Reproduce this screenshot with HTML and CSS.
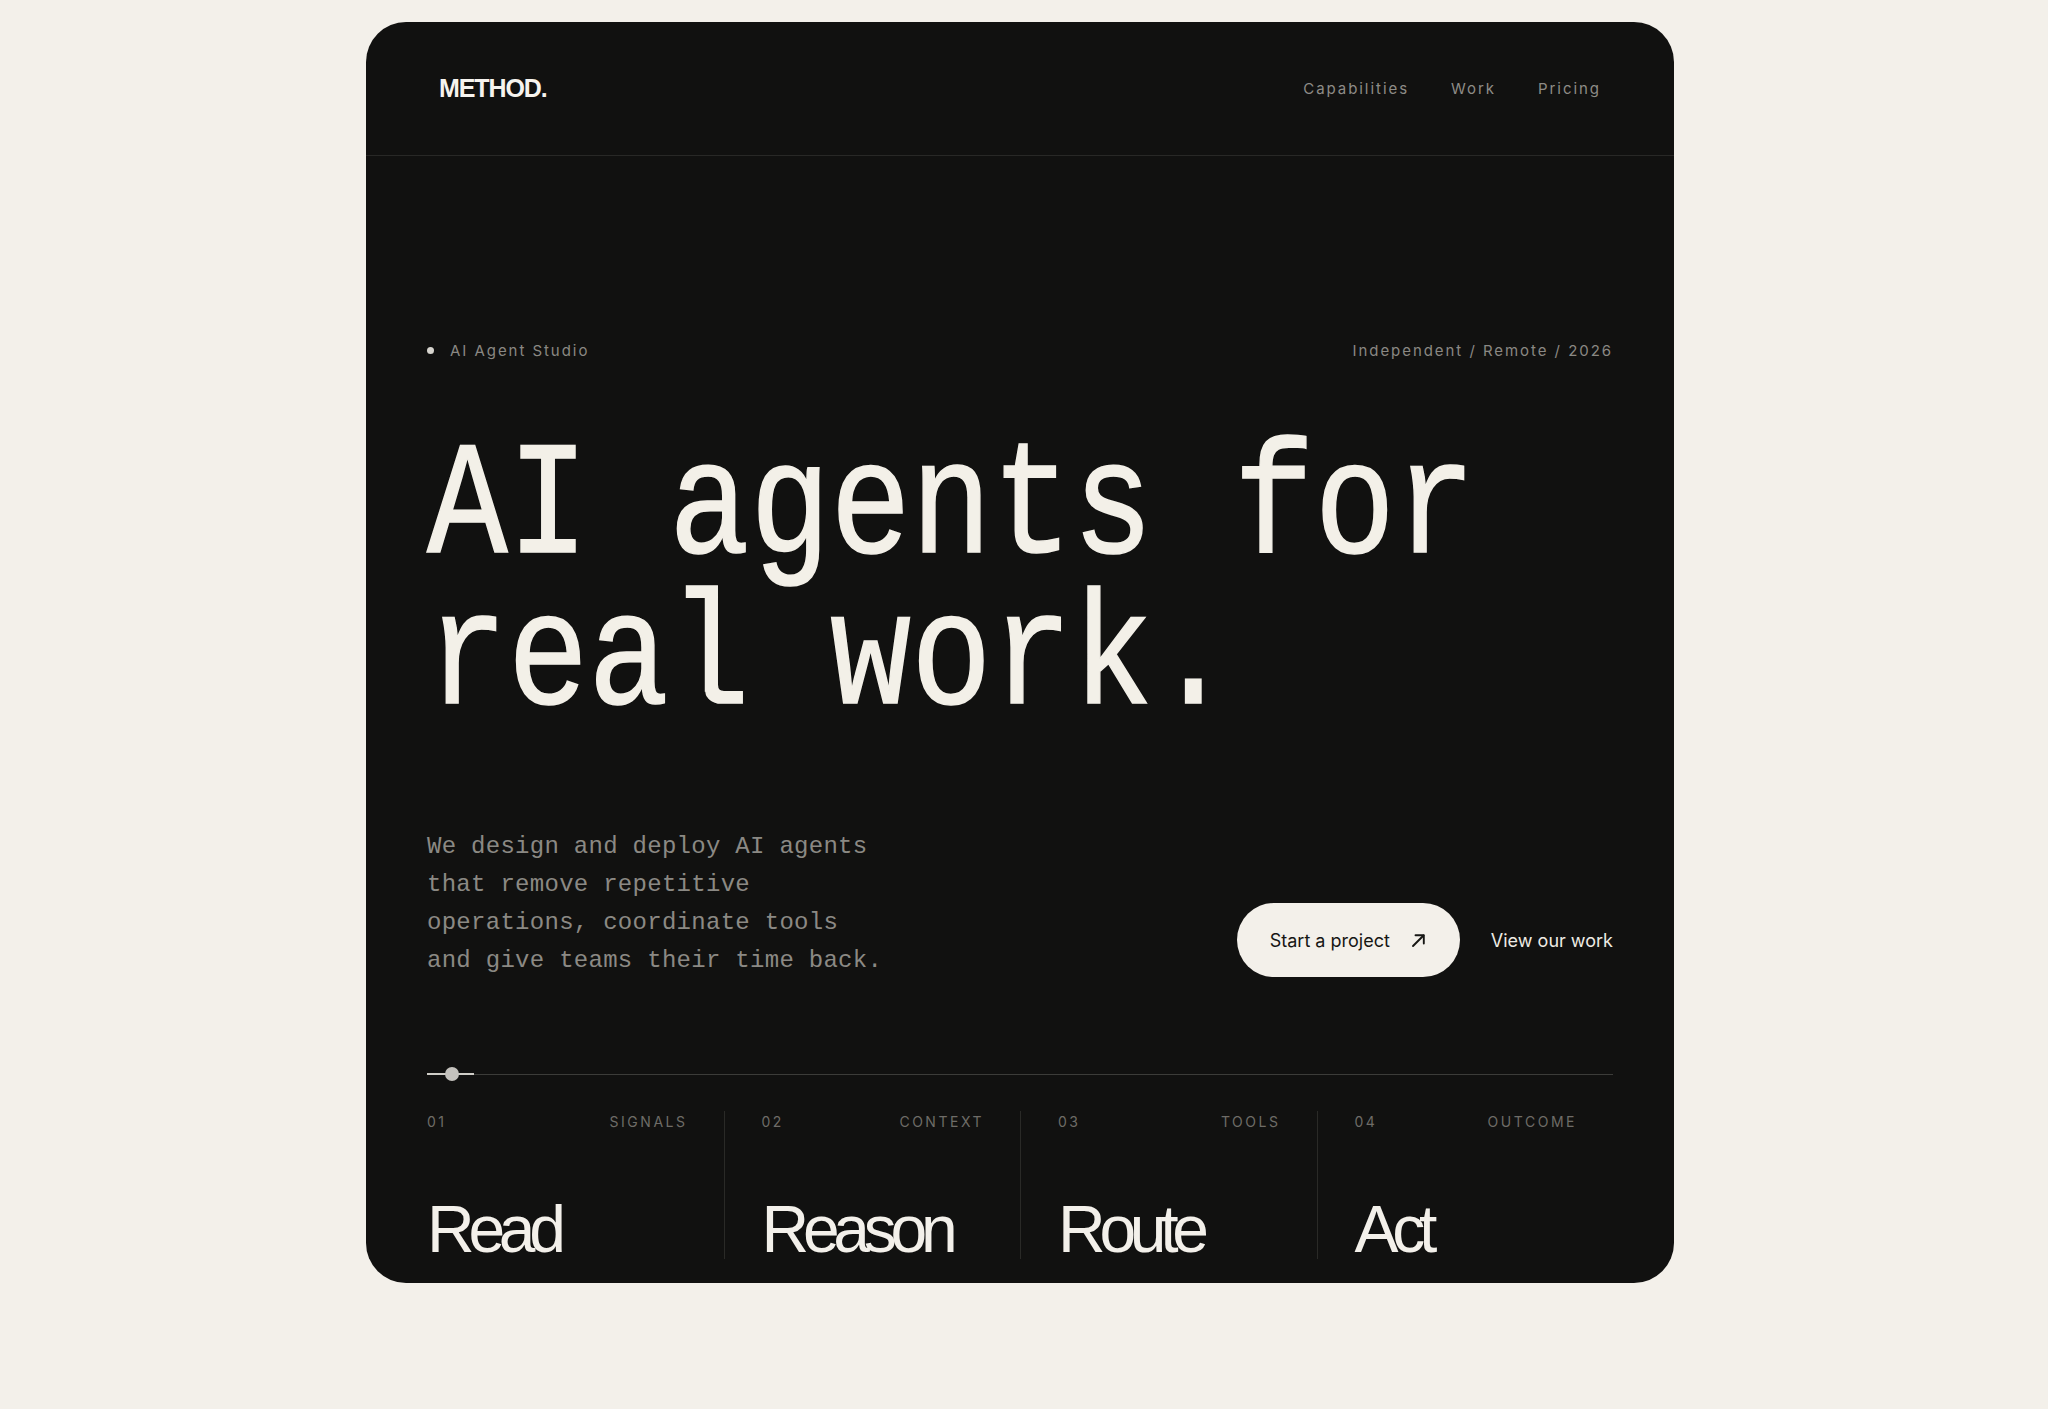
FILE: index.html
```html
<!DOCTYPE html>
<html lang="en">
<head>
<meta charset="utf-8">
<title>METHOD. — AI Agent Studio</title>
<link rel="stylesheet" href="styles.css">
</head>
<body>
<div class="page">
  <div class="card">
    <header class="header">
      <div class="logo">METHOD.</div>
      <nav class="nav">
        <a href="#">Capabilities</a>
        <a href="#">Work</a>
        <a href="#">Pricing</a>
      </nav>
    </header>
    <main class="main">
      <div class="meta">
        <div class="meta-left"><span class="dot"></span><span>AI Agent Studio</span></div>
        <div class="meta-right">Independent / Remote / 2026</div>
      </div>
      <h1 class="headline"><span class="line">AI agents for</span><span class="line">real work.</span></h1>
      <div class="intro">
        <p class="lead">We design and deploy AI agents that remove repetitive operations, coordinate tools and give teams their time back.</p>
        <div class="actions">
          <a class="btn-primary" href="#">Start a project
            <svg class="arrow" width="15" height="15" viewBox="0 0 15 15" fill="none"><path d="M2 13 L12.5 2.5" stroke="#161614" stroke-width="1.9" stroke-linecap="round"/><path d="M4.5 2.2 H12.8 V10.5" stroke="#161614" stroke-width="1.9" stroke-linecap="round" stroke-linejoin="round"/></svg>
          </a>
          <a class="btn-link" href="#">View our work</a>
        </div>
      </div>
      <div class="slider">
        <div class="track"></div>
        <div class="track-fill"></div>
        <div class="knob"></div>
      </div>
      <div class="steps">
        <div class="step">
          <div class="step-label"><span>01</span><span>Signals</span></div>
          <div class="step-title">Read</div>
        </div>
        <div class="step">
          <div class="step-label"><span>02</span><span>Context</span></div>
          <div class="step-title">Reason</div>
        </div>
        <div class="step">
          <div class="step-label"><span>03</span><span>Tools</span></div>
          <div class="step-title">Route</div>
        </div>
        <div class="step">
          <div class="step-label"><span>04</span><span>Outcome</span></div>
          <div class="step-title">Act</div>
        </div>
      </div>
    </main>
  </div>
</div>
</body>
</html>
```

FILE: styles.css
```css
* { box-sizing: border-box; }

html, body {
  margin: 0;
  padding: 0;
  background: #f3f0ea;
}

body {
  font-family: Inter, "Liberation Sans", sans-serif;
  color: #f3f0ea;
}

a { text-decoration: none; color: inherit; }

.page {
  display: flex;
  justify-content: center;
  padding: 22px 8px 126px 0;
}

.card {
  width: 1308px;
  background: #111110;
  border-radius: 40px;
  overflow: hidden;
  padding-bottom: 24px;
}

.header {
  height: 134px;
  border-bottom: 1px solid #282826;
  display: flex;
  align-items: center;
  justify-content: space-between;
  padding: 0 73px 0 73px;
}

.logo {
  font-family: "Liberation Sans", Arial, sans-serif;
  font-weight: 700;
  font-size: 25px;
  letter-spacing: -1.1px;
  color: #f6f3ee;
}

.nav {
  display: flex;
  gap: 42px;
}

.nav a {
  font-size: 15px;
  letter-spacing: 0.13em;
  color: #8e8c87;
}

.main {
  padding: 184px 61px 0;
}

.meta {
  display: flex;
  justify-content: space-between;
  align-items: center;
  height: 20px;
  font-size: 15px;
  letter-spacing: 0.13em;
  color: #8a8883;
}

.meta-left {
  display: flex;
  align-items: center;
  gap: 16px;
}

.dot {
  width: 7px;
  height: 7px;
  border-radius: 50%;
  background: #d6d4ce;
}

.headline {
  margin: 74px 0 0;
  font-family: "Liberation Mono", monospace;
  font-weight: 400;
  font-size: 161px;
  line-height: 151px;
  color: #f3f0e8;
  -webkit-text-stroke: 1.6px #f3f0e8;
  white-space: nowrap;
  transform: scaleX(0.835);
  transform-origin: left top;
}

.line {
  display: block;
  height: 151px;
}

.intro {
  margin-top: 89px;
  display: flex;
  justify-content: space-between;
  align-items: flex-end;
}

.lead {
  margin: 0 0 -3px;
  padding-top: 3px;
  width: 468px;
  font-family: "Liberation Mono", monospace;
  font-size: 24px;
  line-height: 38px;
  letter-spacing: 0.28px;
  color: #8b8984;
}

.actions {
  display: flex;
  align-items: center;
  gap: 31px;
}

.btn-primary {
  height: 74px;
  padding: 0 34px 0 33px;
  border-radius: 37px;
  background: #f3f0ea;
  color: #161614;
  display: flex;
  align-items: center;
  gap: 21px;
  font-size: 18px;
}

.arrow { display: block; }

.btn-link {
  font-size: 18px;
  color: #eeebe4;
}

.slider {
  margin-top: 90px;
  height: 14px;
  position: relative;
}

.track {
  position: absolute;
  left: 0;
  right: 0;
  top: 7px;
  height: 1px;
  background: #3c3c39;
}

.track-fill {
  position: absolute;
  left: 0;
  width: 47px;
  top: 6px;
  height: 2px;
  background: #cfcdc7;
}

.knob {
  position: absolute;
  left: 18px;
  top: 0;
  width: 14px;
  height: 14px;
  border-radius: 50%;
  background: #c4c2bd;
}

.steps {
  margin-top: 30px;
  display: grid;
  grid-template-columns: repeat(4, 1fr);
}

.step {
  padding: 0 36px 0 37px;
  border-left: 1px solid #2a2a27;
}

.step:first-child {
  padding-left: 0;
  border-left: none;
}

.step-label {
  display: flex;
  justify-content: space-between;
  height: 22px;
  line-height: 22px;
  font-size: 14px;
  letter-spacing: 0.18em;
  text-transform: uppercase;
  color: #6e6c67;
}

.step-title {
  margin-top: 66px;
  font-family: "Liberation Sans", Arial, sans-serif;
  font-size: 66px;
  line-height: 60px;
  letter-spacing: -0.095em;
  color: #f3f0ea;
}
```
